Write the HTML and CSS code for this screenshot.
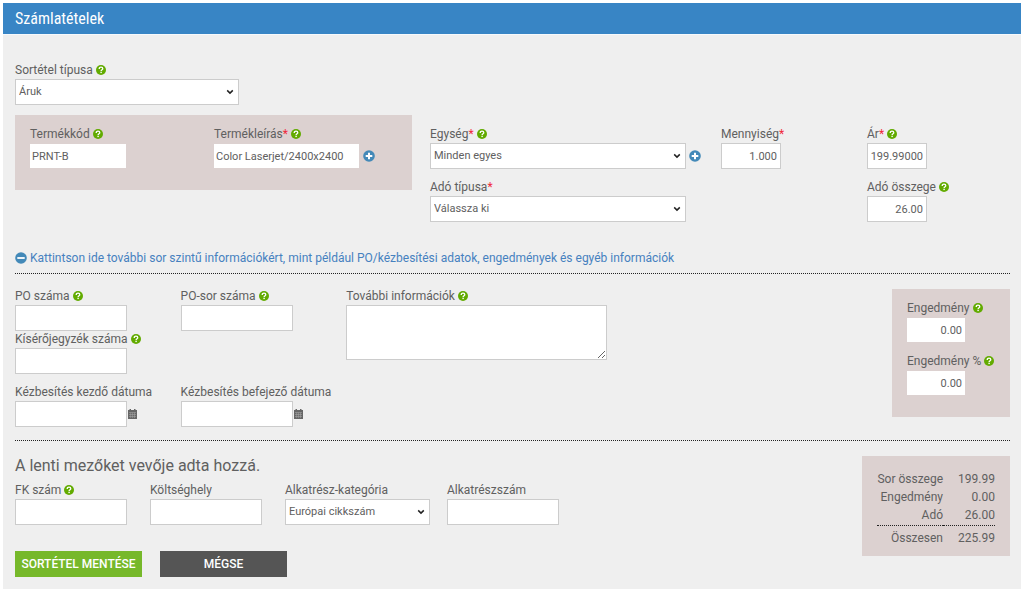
FILE: index.html
```html
<!DOCTYPE html>
<html lang="hu">
<head>
<meta charset="utf-8">
<meta name="viewport" content="width=device-width, initial-scale=1">
<title>Számlatételek</title>
<link rel="stylesheet" href="styles.css">
</head>
<body>
<svg class="sprite" aria-hidden="true">
  <symbol id="help" viewBox="0 0 10 10">
    <circle cx="5" cy="5" r="5" fill="#62ab00"/>
    <path d="M3.2 3.900C3.2 2.700 4 2.200 5 2.200s1.800.6 1.800 1.500C6.800 4.700 5.100 4.700 5.100 6" fill="none" stroke="#fff" stroke-width="1.300"/>
    <rect x="4.400" y="6.700" width="1.400" height="1.400" fill="#fff"/>
  </symbol>
  <symbol id="plus" viewBox="0 0 12 12">
    <circle cx="6" cy="6" r="5.800" fill="#4389b8"/>
    <path d="M6 2.700v6.600M2.700 6h6.600" stroke="#fff" stroke-width="2"/>
  </symbol>
  <symbol id="minus" viewBox="0 0 12 12">
    <circle cx="6" cy="6" r="5.800" fill="#4389b8"/>
    <path d="M2.300 6h7.400" stroke="#fff" stroke-width="1.800"/>
  </symbol>
  <symbol id="calendar" viewBox="0 0 9 10">
    <path d="M0 1h1.500V0h1.500v1h3V0h1.500v1H9v9H0z" fill="#666"/>
    <path d="M1 3.500h7M1 5.500h7M1 7.500h7M2.700 3.500v5.500M4.600 3.500v5.500M6.500 3.500v5.500" stroke="#aaa" stroke-width=".5"/>
  </symbol>
</svg>
<main class="panel">
  <h1 class="panel-title">Számlatételek</h1>
  <form class="panel-body">
    <div class="field">
      <div class="caption"><label for="type">Sortétel típusa</label><svg class="help"><use href="#help"/></svg></div>
      <select id="type" class="control type-select"><option>Áruk</option></select>
    </div>

    <div class="item-grid">
      <div class="shaded product">
        <div class="field">
          <div class="caption"><label for="code">Termékkód</label><svg class="help"><use href="#help"/></svg></div>
          <input id="code" class="control code-input" value="PRNT-B">
        </div>
        <div class="field">
          <div class="caption"><label for="desc">Termékleírás<span class="req">*</span></label><svg class="help"><use href="#help"/></svg></div>
          <div class="with-icon"><input id="desc" class="control desc-input" value="Color Laserjet/2400x2400"><button type="button" class="icon-button" aria-label="+"><svg class="round"><use href="#plus"/></svg></button></div>
        </div>
      </div>
      <div class="stack">
        <div class="field">
          <div class="caption"><label for="unit">Egység<span class="req">*</span></label><svg class="help"><use href="#help"/></svg></div>
          <div class="with-icon"><select id="unit" class="control unit-select"><option>Minden egyes</option></select><button type="button" class="icon-button" aria-label="+"><svg class="round"><use href="#plus"/></svg></button></div>
        </div>
        <div class="field">
          <div class="caption"><label for="tax">Adó típusa<span class="req">*</span></label></div>
          <select id="tax" class="control unit-select"><option>Válassza ki</option></select>
        </div>
      </div>
      <div class="stack">
        <div class="field">
          <div class="caption"><label for="qty">Mennyiség<span class="req">*</span></label></div>
          <input id="qty" class="control amount" value="1.000">
        </div>
      </div>
      <div class="stack">
        <div class="field">
          <div class="caption"><label for="price">Ár<span class="req">*</span></label><svg class="help"><use href="#help"/></svg></div>
          <input id="price" class="control amount" value="199.99000">
        </div>
        <div class="field">
          <div class="caption"><label for="taxsum">Adó összege</label><svg class="help"><use href="#help"/></svg></div>
          <input id="taxsum" class="control amount" value="26.00">
        </div>
      </div>
    </div>

    <a href="#details" class="toggle"><svg class="round"><use href="#minus"/></svg><span>Kattintson ide további sor szintű információkért, mint például PO/kézbesítési adatok, engedmények és egyéb információk</span></a>

    <section id="details" class="details">
      <div class="details-grid">
        <div class="details-column">
          <div class="field">
            <div class="caption"><label for="po">PO száma</label><svg class="help"><use href="#help"/></svg></div>
            <input id="po" class="control text-input">
          </div>
          <div class="field">
            <div class="caption"><label for="slip">Kísérőjegyzék száma</label><svg class="help"><use href="#help"/></svg></div>
            <input id="slip" class="control text-input">
          </div>
        </div>
        <div class="field">
          <div class="caption"><label for="poline">PO-sor száma</label><svg class="help"><use href="#help"/></svg></div>
          <input id="poline" class="control text-input">
        </div>
        <div class="field">
          <div class="caption"><label for="more">További információk</label><svg class="help"><use href="#help"/></svg></div>
          <textarea id="more" class="control notes"></textarea>
        </div>
        <div class="field">
          <div class="caption"><label for="from">Kézbesítés kezdő dátuma</label></div>
          <div class="with-date"><input id="from" class="control text-input"><button type="button" class="icon-button" aria-label="Kézbesítés kezdő dátuma"><svg class="calendar"><use href="#calendar"/></svg></button></div>
        </div>
        <div class="field">
          <div class="caption"><label for="to">Kézbesítés befejező dátuma</label></div>
          <div class="with-date"><input id="to" class="control text-input"><button type="button" class="icon-button" aria-label="Kézbesítés befejező dátuma"><svg class="calendar"><use href="#calendar"/></svg></button></div>
        </div>
      </div>
      <div class="shaded discount stack">
        <div class="field">
          <div class="caption"><label for="disc">Engedmény</label><svg class="help"><use href="#help"/></svg></div>
          <input id="disc" class="control amount" value="0.00">
        </div>
        <div class="field">
          <div class="caption"><label for="discp">Engedmény %</label><svg class="help"><use href="#help"/></svg></div>
          <input id="discp" class="control amount" value="0.00">
        </div>
      </div>
    </section>

    <section class="custom">
      <div>
        <h2 class="custom-title">A lenti mezőket vevője adta hozzá.</h2>
        <div class="custom-grid">
          <div class="field">
            <div class="caption"><label for="fk">FK szám</label><svg class="help"><use href="#help"/></svg></div>
            <input id="fk" class="control text-input">
          </div>
          <div class="field">
            <div class="caption"><label for="cost">Költséghely</label></div>
            <input id="cost" class="control text-input">
          </div>
          <div class="field">
            <div class="caption"><label for="cat">Alkatrész-kategória</label></div>
            <select id="cat" class="control cat-select"><option>Európai cikkszám</option></select>
          </div>
          <div class="field">
            <div class="caption"><label for="part">Alkatrészszám</label></div>
            <input id="part" class="control text-input">
          </div>
        </div>
        <div class="actions">
          <button type="submit" class="button save">SORTÉTEL MENTÉSE</button>
          <button type="button" class="button cancel">MÉGSE</button>
        </div>
      </div>
      <div class="shaded summary">
        <table class="totals">
          <tbody>
            <tr><th scope="row">Sor összege</th><td>199.99</td></tr>
            <tr><th scope="row">Engedmény</th><td>0.00</td></tr>
            <tr><th scope="row">Adó</th><td>26.00</td></tr>
          </tbody>
          <tfoot>
            <tr><th scope="row">Összesen</th><td>225.99</td></tr>
          </tfoot>
        </table>
      </div>
    </section>
  </form>
</main>
</body>
</html>
```
FILE: styles.css
```css
* { box-sizing: border-box; }
body {
  margin: 0;
  padding: 3px;
  background: #fff;
  color: #606060;
  font: 12px/17px Roboto, "Liberation Sans", sans-serif;
}
.sprite { display: none; }
.panel { background: #efefef; }
.panel-title {
  margin: 0;
  padding: 0 12px;
  background: #3885c5;
  border-bottom: 1px solid #f6f9fc;
  color: #fff;
  font: 400 16px/31px "Roboto Condensed", Roboto, sans-serif;
}
.panel-body { padding: 27px 11px 12px 12px; }

.caption { display: flex; align-items: center; gap: 3px; height: 17px; white-space: nowrap; }
.help { width: 10px; height: 10px; flex: none; margin-bottom: 1px; }
.req { color: #f0283c; }
.control {
  display: block;
  height: 26px;
  margin: 0;
  padding: 0 3px 0 2px;
  border: 1px solid #ccc;
  border-radius: 0;
  background: #fff;
  color: #606060;
  font: 11px/16px Roboto, "Liberation Sans", sans-serif;
}
select.control {
  appearance: none;
  padding: 0 16px 1px 3px;
  background: #fff url("data:image/svg+xml,%3Csvg xmlns='http://www.w3.org/2000/svg' width='8' height='6'%3E%3Cpath d='M1.200 1.400L4 4.100l2.800-2.700' fill='none' stroke='%23222' stroke-width='1.500'/%3E%3C/svg%3E") no-repeat right 4px center;
}
.shaded { background: #dcd1d0; }
.shaded .control { border-color: #dcd1d0; }
.stack { display: flex; flex-direction: column; gap: 10px; }
.with-icon, .with-date { display: flex; align-items: center; }
.with-icon { gap: 3px; }
.icon-button { display: flex; padding: 0; border: 0; background: none; cursor: pointer; }
.with-date .icon-button { padding-left: 1px; }
.round { width: 12px; height: 12px; flex: none; }
.calendar { width: 9px; height: 10px; }

.type-select { width: 224px; }
.code-input { width: 98px; }
.desc-input { width: 147px; }
.unit-select { width: 256px; }
.text-input { width: 112px; }
.cat-select { width: 145px; }
.amount { width: 60px; text-align: right; }
.notes { width: 261px; height: 55px; resize: both; }

.item-grid {
  display: grid;
  grid-template-columns: 397fr 273fr 128fr 143fr;
  column-gap: 18px;
  align-items: start;
  padding-top: 10px;
}
.item-grid > .stack { padding-top: 11px; }
.product {
  display: grid;
  grid-template-columns: 1fr 1fr;
  padding: 11px 15px 21px 14px;
}
.product .caption { padding-left: 1px; }

.toggle {
  display: flex;
  align-items: center;
  gap: 3px;
  margin-top: 27px;
  padding-bottom: 6px;
  border-bottom: 1px dotted #222;
  color: #4681bf;
  line-height: 18px;
  text-decoration: none;
}
.details {
  display: flex;
  justify-content: space-between;
  align-items: flex-start;
  padding: 14px 0 13px;
  border-bottom: 1px dotted #222;
}
.details-grid {
  display: grid;
  grid-template-columns: 1fr 1fr 3fr;
  row-gap: 10px;
  flex: 0 1 828px;
}
.discount { width: 118px; margin-top: 1px; padding: 11px 14px 21px; }
.discount .caption { padding-left: 1px; }

.custom { display: flex; justify-content: space-between; align-items: flex-start; padding-top: 15px; }
.custom-title { margin: 0 0 6px; font-size: 16px; font-weight: 400; line-height: 20px; }
.custom-grid { display: grid; grid-template-columns: 135px 135px 162px 112px; }
.actions { display: flex; gap: 18px; padding-top: 26px; }
.button {
  width: 127px;
  height: 26px;
  padding: 0;
  border: 0;
  color: #fff;
  font: 500 12px/26px Roboto, sans-serif;
  cursor: pointer;
}
.save { background: #76b82a; }
.cancel { background: #555; }

.summary { width: 148px; padding: 14px 15px 9px; }
.totals { width: 100%; border-collapse: collapse; }
.totals th, .totals td { padding: 0; font-weight: 400; line-height: 18px; text-align: right; }
.totals td { width: 52px; }
.totals tfoot th, .totals tfoot td { padding-top: 3px; border-top: 1px dotted #222; }
.totals tbody tr:last-child > * { padding-bottom: 1px; }
```
